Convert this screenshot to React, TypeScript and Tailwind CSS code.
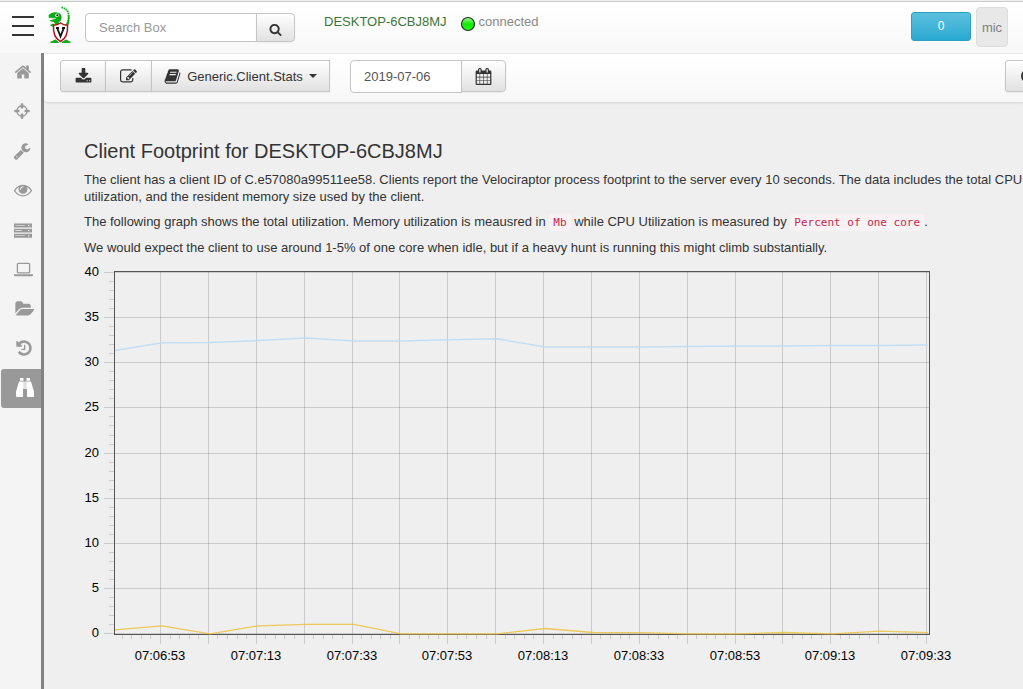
import React from "react";

const HOME =
  "M1472 992v480q0 26-19 45t-45 19h-384v-384h-256v384h-384q-26 0-45-19t-19-45v-480q0-1 .5-3t.5-3l575-474 575 474q1 2 1 6zm223-69l-62 74q-8 9-21 11h-3q-13 0-21-7l-692-577-692 577q-12 8-24 7-13-2-21-11l-62-74q-8-10-7-23.5t11-21.5l719-599q32-26 76-26t76 26l244 204v-195q0-14 9-23t23-9h192q14 0 23 9t9 23v408l219 182q10 8 11 21.5t-7 23.5z";
const SEARCH =
  "M1216 832q0-185-131.5-316.5t-316.5-131.5-316.5 131.5-131.5 316.5 131.5 316.5 316.5 131.5 316.5-131.5 131.5-316.5zm512 832q0 52-38 90t-90 38q-54 0-90-38l-343-342q-179 124-399 124-143 0-273.5-55.5t-225-150-150-225-55.5-273.5 55.5-273.5 150-225 225-150 273.5-55.5 273.5 55.5 225 150 150 225 55.5 273.5q0 220-124 399l343 343q37 37 37 90z";
const DOWNLOAD =
  "M1344 1344q0-26-19-45t-45-19-45 19-19 45 19 45 45 19 45-19 19-45zm256 0q0-26-19-45t-45-19-45 19-19 45 19 45 45 19 45-19 19-45zm128-224v320q0 40-28 68t-68 28h-1472q-40 0-68-28t-28-68v-320q0-40 28-68t68-28h465l135 136q58 56 136 56t136-56l136-136h464q40 0 68 28t28 68zm-325-569q17 41-14 70l-448 448q-18 19-45 19t-45-19l-448-448q-31-29-14-70 17-39 59-39h256v-448q0-26 19-45t45-19h256q26 0 45 19t19 45v448h256q42 0 59 39z";
const EDIT =
  "M888 1184l116-116-152-152-116 116v56h96v96h56zm440-720q-16-16-33 1l-350 350q-17 17-1 33t33-1l350-350q17-17 1-33zm80 594v190q0 119-84.5 203.5t-203.5 84.5h-832q-119 0-203.5-84.5t-84.5-203.5v-832q0-119 84.5-203.5t203.5-84.5h832q63 0 117 25 15 7 18 23 3 17-9 29l-49 49q-14 14-32 8-23-6-45-6h-832q-66 0-113 47t-47 113v832q0 66 47 113t113 47h832q66 0 113-47t47-113v-126q0-13 9-22l64-64q15-15 35-7t20 29zm-96-738l288 288-672 672h-288v-288zm444 132l-92 92-288-288 92-92q28-28 68-28t68 28l152 152q28 28 28 68t-28 68z";
const BOOK =
  "M1703 478q40 57 18 129l-275 906q-19 64-76.5 107.5t-122.5 43.5h-923q-77 0-148.5-53.5t-99.5-131.5q-24-67-2-127 0-4 3-27t4-37q1-8-3-21.5t-3-19.5q2-11 8-21t16.5-23.5 16.5-23.5q23-38 45-91.5t30-91.5q3-10 .5-30t-.5-28q3-11 17-28t17-23q21-36 42-92t25-90q1-9-2.5-32t.5-28q4-13 22-30.5t22-22.5q19-26 42.5-84.5t27.5-96.5q1-8-3-25.5t-2-26.5q2-8 9-18t18-23 17-21q8-12 16.5-30.5t15-35 16-36 19.5-32 26.5-23.5 36-11.5 47.5 5.5l-1 3q38-9 51-9h761q74 0 114 56t18 130l-274 906q-36 119-71.5 153.5t-128.5 34.5h-869q-27 0-38 15-11 16-1 43 24 70 144 70h923q29 0 56-15.5t35-41.5l300-987q7-22 5-57 38 15 59 43zm-1064 2q-4 13 2 22.5t20 9.5h608q13 0 25.5-9.5t16.5-22.5l21-64q4-13-2-22.5t-20-9.5h-608q-13 0-25.5 9.5t-16.5 22.5zm-83 256q-4 13 2 22.5t20 9.5h608q13 0 25.5-9.5t16.5-22.5l21-64q4-13-2-22.5t-20-9.5h-608q-13 0-25.5 9.5t-16.5 22.5z";
const CALENDAR =
  "M192 1664h288v-288h-288v288zm352 0h320v-288h-320v288zm-352-352h288v-320h-288v320zm352 0h320v-320h-320v320zm-352-384h288v-288h-288v288zm736 736h320v-288h-320v288zm-384-736h320v-288h-320v288zm768 736h288v-288h-288v288zm-384-352h320v-320h-320v320zm-352-864v-288q0-13-9.5-22.5t-22.5-9.5h-64q-13 0-22.5 9.5t-9.5 22.5v288q0 13 9.5 22.5t22.5 9.5h64q13 0 22.5-9.5t9.5-22.5zm736 864h288v-320h-288v320zm-384-384h320v-288h-320v288zm384 0h288v-288h-288v288zm32-480v-288q0-13-9.5-22.5t-22.5-9.5h-64q-13 0-22.5 9.5t-9.5 22.5v288q0 13 9.5 22.5t22.5 9.5h64q13 0 22.5-9.5t9.5-22.5zm384-64v1280q0 52-38 90t-90 38h-1408q-52 0-90-38t-38-90v-1280q0-52 38-90t90-38h128v-96q0-66 47-113t113-47h64q66 0 113 47t47 113v96h384v-96q0-66 47-113t113-47h64q66 0 113 47t47 113v96h128q52 0 90 38t38 90z";
const WRENCH =
  "M448 1472q0-26-19-45t-45-19-45 19-19 45 19 45 45 19 45-19 19-45zm644-420l-682 682q-37 37-90 37-52 0-91-37l-106-108q-38-36-38-90 0-53 38-91l681-681q39 98 114.5 173.5t173.5 114.5zm634-435q0 39-23 106-47 134-164.5 217.5t-258.5 83.5q-185 0-316.5-131.5t-131.5-316.5 131.5-316.5 316.5-131.5q58 0 121.5 16.5t107.5 46.5q16 11 16 28t-16 28l-293 169v224l193 107q5-3 79-48.5t135.5-81 70.5-35.5q15 0 23.5 10t8.5 25z";
const EYE =
  "M1664 960q-152-236-381-353 61 104 61 225 0 185-131.5 316.5t-316.5 131.5-316.5-131.5-131.5-316.5q0-121 61-225-229 117-381 353 133 205 333.5 326.5t434.5 121.5 434.5-121.5 333.5-326.5zm-720-384q0-20-14-34t-34-14q-125 0-214.5 89.5t-89.5 214.5q0 20 14 34t34 14 34-14 14-34q0-86 61-147t147-61q20 0 34-14t14-34zm848 384q0 34-20 69-140 230-376.5 368.5t-499.5 138.5-499.5-139-376.5-368q-20-35-20-69t20-69q140-229 376.5-368t499.5-139 499.5 139 376.5 368q20 35 20 69z";
const CROSSHAIRS =
  "M1325 1024h-109q-26 0-45-19t-19-45v-128q0-26 19-45t45-19h109q-32-108-112.5-188.5t-188.5-112.5v109q0 26-19 45t-45 19h-128q-26 0-45-19t-19-45v-109q-108 32-188.5 112.5t-112.5 188.5h109q26 0 45 19t19 45v128q0 26-19 45t-45 19h-109q32 108 112.5 188.5t188.5 112.5v-109q0-26 19-45t45-19h128q26 0 45 19t19 45v109q108-32 188.5-112.5t112.5-188.5zm339-192v128q0 26-19 45t-45 19h-143q-37 161-154.5 278.5t-278.5 154.5v143q0 26-19 45t-45 19h-128q-26 0-45-19t-19-45v-143q-161-37-278.5-154.5t-154.5-278.5h-143q-26 0-45-19t-19-45v-128q0-26 19-45t45-19h143q37-161 154.5-278.5t278.5-154.5v-143q0-26 19-45t45-19h128q26 0 45 19t19 45v143q161 37 278.5 154.5t154.5 278.5h143q26 0 45 19t19 45z";
const SERVER =
  "M0 256h1792v384h-1792zm128 160v64h960v-64zm1280-32v128h128v-128zM0 768h1792v384h-1792zm128 160v64h640v-64zm1280-32v128h128v-128zM0 1280h1792v384h-1792zm128 160v64h960v-64zm1280-32v128h128v-128z";
const LAPTOP =
  "M416 1280q-66 0-113-47t-47-113v-704q0-66 47-113t113-47h960q66 0 113 47t47 113v704q0 66-47 113t-113 47h-960zm-32-864v704q0 13 9.5 22.5t22.5 9.5h960q13 0 22.5-9.5t9.5-22.5v-704q0-13-9.5-22.5t-22.5-9.5h-960q-13 0-22.5 9.5t-9.5 22.5zM0 1344h1792v96q0 40-47 68t-113 28h-1472q-66 0-113-28t-47-68z";
const FOLDER =
  "M1815 952q0 31-31 66l-336 396q-43 51-120.5 86.5t-143.5 35.5h-1088q-34 0-60.5-13t-26.5-43q0-31 31-66l336-396q43-51 120.5-86.5t143.5-35.5h1088q34 0 60.5 13t26.5 43zm-343-344v160h-832q-94 0-197 47.5t-164 119.5l-337 396-5 6q0-4-.5-12.5t-.5-12.5v-960q0-92 66-158t158-66h320q92 0 158 66t66 158v32h544q92 0 158 66t66 158z";
const HISTORY =
  "M1664 896q0 156-61 298t-164 245-245 164-298 61q-172 0-327-72.5t-264-204.5q-7-10-6.5-22.5t8.5-20.5l137-138q10-9 25-9 16 2 23 12 73 95 179 147t225 52q104 0 198.5-40.5t163.5-109.5 109.5-163.5 40.5-198.5-40.5-198.5-109.5-163.5-163.5-109.5-198.5-40.5q-98 0-188 35.5t-160 101.5l137 138q31 30 14 69-17 40-59 40h-448q-26 0-45-19t-19-45v-448q0-42 40-59 39-17 69 14l130 129q107-101 244.5-156.5t284.5-55.5q156 0 298 61t245 164 164 245 61 298zm-640-288v448q0 14-9 23t-23 9h-320q-14 0-23-9t-9-23v-64q0-14 9-23t23-9h224v-352q0-14 9-23t23-9h64q14 0 23 9t9 23z";

function Icon({ d, className }: { d: string; className: string }) {
  return (
    <svg viewBox="0 0 1792 1792" className={`shrink-0 overflow-visible ${className}`} fill="currentColor" fillRule="evenodd" aria-hidden="true">
      <path d={d} />
    </svg>
  );
}

function Binoculars() {
  return (
    <svg width="18" height="19" viewBox="0 0 18 19" fill="currentColor" aria-hidden="true">
      <path d="M4 0h3.500v2.800H4zM10.500 0H14v2.800h-3.500z" />
      <path d="M3 3.600h4.800V11H7v7.200q0 .8-.8.8H.8q-.8 0-.8-.8v-4.500zM15 3.600h-4.800V11h.8v7.200q0 .8.8.8h5.400q.8 0 .8-.8v-4.500zM8.300 3.600h1.400V11H8.300z" />
    </svg>
  );
}

function Logo() {
  return (
    <svg width="24" height="38" viewBox="0 0 24 38" aria-label="Velociraptor" role="img">
      <path d="M13.500 1.300C18 2 21.500 6 20.700 12c-.3 3-1 5-2.200 7" fill="none" stroke="#0aab12" strokeWidth="1.800" strokeDasharray="1.600 .7" />
      <path d="M19.800 9c.6 4-.3 8-2.800 11l2.500 1c2-4 2.300-8 1.500-12z" fill="#0aab12" />
      <path d="M.5 9.500C2 7 6 5.500 9 6.500c3.500.3 5 3 4.500 6-.5 2.500-1.500 3-3 3.800l3 2.700-4.500 3-3-6-3-.5-1.500-1L7 13 1 12z" fill="#0aab12" />
      <path d="M1 12.300h7" stroke="#fff" strokeWidth=".7" />
      <circle cx="9" cy="9.200" r="1.800" fill="#fff" />
      <circle cx="9.300" cy="9.300" r="1" fill="#111" />
      <path d="M2 19l3-1.500 3 2-3 1.500z" fill="#0aab12" />
      <path d="M2.500 36.300l5-2.300 3 2.500zM14 36.500l4-2.500 4.500 2.300z" fill="#0aab12" stroke="#0aab12" />
      <path d="M12.500 17c2 1.500 4.500 2.200 7 2.200.5 7-1 13-7 16.300-6-3.300-7.500-9.300-7-16.300 2.500 0 5-.7 7-2.200z" fill="#fff" stroke="#b3151b" strokeWidth="1.500" />
      <path d="M8 22h3M14 22h3M9.200 22l3.300 8.500 3.300-8.500" stroke="#151515" strokeWidth="1.900" fill="none" />
    </svg>
  );
}

const navItems = [
  { label: "Home", d: HOME, pad: "pl-[14px]", size: "size-[18px]" },
  { label: "Hunts", d: CROSSHAIRS, pad: "pl-[13px]", size: "size-[18px]" },
  { label: "Artifacts", d: WRENCH, pad: "pl-[13px]", size: "size-[18px]" },
  { label: "Events", d: EYE, pad: "pl-[14px]", size: "size-[18px]" },
  { label: "Server", d: SERVER, pad: "pl-[14px]", size: "size-[18px]" },
  { label: "Host", d: LAPTOP, pad: "pl-[14px]", size: "size-[19px]" },
  { label: "Files", d: FOLDER, pad: "pl-[16px]", size: "size-[18px]" },
  { label: "History", d: HISTORY, pad: "pl-[15px]", size: "size-[18px]" },
];

const X0 = 90;
const STEP = 47.88;
const yOf = (v: number) => Math.round((367 - v * 9.025) * 10) / 10;
const memory = [31.3, 32.15, 32.2, 32.4, 32.7, 32.35, 32.35, 32.5, 32.6, 31.7, 31.7, 31.7, 31.75, 31.8, 31.8, 31.85, 31.85, 31.9];
const cpu = [0.35, 0.8, -0.1, 0.8, 0.95, 0.95, -0.1, -0.1, -0.1, 0.5, 0.05, 0.03, -0.1, -0.1, 0.05, -0.1, 0.2, 0.03];
const times = ["07:06:53", "07:07:13", "07:07:33", "07:07:53", "07:08:13", "07:08:33", "07:08:53", "07:09:13", "07:09:33"];
const points = (values: number[]) =>
  values.map((v, i) => `${i === 0 ? 45 : Math.round(X0 + 2 + (i - 1) * STEP)},${yOf(v)}`).join(" ");

function Chart() {
  const majors = Array.from({ length: 18 }, (_, i) => Math.round(X0 + i * STEP)).filter((x) => x < 859);
  const minorX = Array.from({ length: 85 }, (_, i) => Math.round(X0 + (i - 4) * (STEP / 5)));
  const minorY = Array.from({ length: 41 }, (_, i) => Math.round(yOf(i)));
  const levels = [0, 5, 10, 15, 20, 25, 30, 35, 40];
  return (
    <svg width="900" height="416" viewBox="0 -6 900 416" className="block shrink-0" role="img" aria-label="Memory and CPU utilization">
      <g stroke="#000" strokeOpacity=".15" shapeRendering="crispEdges">
        {majors.map((x) => <line key={x} x1={x + 0.5} x2={x + 0.5} y1="6" y2="378" />)}
        {levels.map((v) => <line key={v} x1="34" x2="859" y1={Math.round(yOf(v)) + 0.5} y2={Math.round(yOf(v)) + 0.5} />)}
        {minorX.filter((x) => x < 859 && !majors.includes(x)).map((x) => <line key={x} x1={x + 0.5} x2={x + 0.5} y1="369" y2="373" />)}
        {minorY.filter((_, i) => i % 5 !== 0).map((y) => <line key={y} x1="39" x2="44" y1={y + 0.5} y2={y + 0.5} />)}
      </g>
      <rect x="44.5" y="5.500" width="815" height="363" fill="none" stroke="#545454" />
      <polyline points={points(memory)} fill="none" stroke="#c3def4" strokeWidth="1.500" />
      <polyline points={points(cpu)} fill="none" stroke="#edc240" strokeOpacity=".85" strokeWidth="1.300" />
      <g fontSize="13" fill="#000">
        {levels.map((v) => (
          <text key={v} x="29" y={Math.round(yOf(v)) + 4} textAnchor="end">{v}</text>
        ))}
        {times.map((t, i) => (
          <text key={t} x={majors[i * 2]} y="394" textAnchor="middle">{t}</text>
        ))}
      </g>
    </svg>
  );
}

const button = "flex items-center justify-center border border-[#c5c5c5] bg-linear-to-b from-white to-[#e1e1e1] text-[#333] shadow-xs";

export default function App() {
  return (
    <div className="flex min-h-screen flex-col overflow-hidden bg-[#efefef] font-['Liberation_Sans',Arial,sans-serif] text-[13px] leading-[17px] text-[#333]">
      <header className="mt-px flex h-[52px] shrink-0 items-start border-t border-[#c9c9c9] bg-linear-to-b from-white to-[#f8f8f8] pr-[15px]">
        <button aria-label="Menu" className="mt-[14px] ml-[12px] flex w-[22px] flex-col gap-[7px]">
          <span className="h-[2px] w-full bg-[#333]" />
          <span className="h-[2px] w-full bg-[#333]" />
          <span className="h-[2px] w-full bg-[#333]" />
        </button>
        <a href="#home" className="mt-[4px] ml-[14px]"><Logo /></a>
        <form className="mt-[11px] ml-[13px] flex h-[29px]">
          <input aria-label="Search Box" placeholder="Search Box" className="w-[172px] rounded-l border border-[#c5c5c5] bg-white px-[13px] placeholder:text-[#999]" />
          <button type="button" aria-label="Search" className={`${button} -ml-px w-[39px] rounded-r pt-[3px]`}>
            <Icon d={SEARCH} className="size-[13px]" />
          </button>
        </form>
        <div className="mt-[11px] ml-[29px] flex items-start text-[#3c763d]">
          <span>DESKTOP-6CBJ8MJ</span>
          <svg width="16" height="16" viewBox="0 0 16 16" className="mt-[3px] ml-[13px]" aria-hidden="true">
            <defs>
              <linearGradient id="lamp" x1="0" y1="0" x2="0" y2="1">
                <stop offset="0" stopColor="#9dff8c" />
                <stop offset=".5" stopColor="#14e808" />
                <stop offset="1" stopColor="#1cff10" />
              </linearGradient>
            </defs>
            <circle cx="8" cy="8" r="6.500" fill="url(#lamp)" stroke="#2b2b33" strokeWidth="1.200" />
          </svg>
          <span className="ml-[3px] text-[#888]">connected</span>
        </div>
        <div className="ml-auto flex gap-[5px]">
          <button className="mt-[10px] h-[29px] w-[60px] rounded-[3px] border border-[#2f9fc0] bg-linear-to-b from-[#5bc0de] to-[#28a9d2] text-[12px] text-white">0</button>
          <button className="mt-[5px] h-[40px] w-[32px] rounded border border-[#dcdcdc] bg-[#e8e8e8] text-[#808080]">mic</button>
        </div>
      </header>

      <div className="flex flex-1">
        <nav className="flex w-[44px] shrink-0 flex-col border-r-3 border-[#818181] bg-[#f4f4f4] text-[#999]">
          <div className="flex h-[316px] flex-col">
            {navItems.map((item) => (
              <a key={item.label} href={`#${item.label.toLowerCase()}`} aria-label={item.label} className={`flex flex-1 items-center pb-[2px] ${item.pad}`}>
                <Icon d={item.d} className={item.size} />
              </a>
            ))}
          </div>
          <a href="#monitoring" aria-label="Monitoring" className="ml-px flex h-[39px] items-center rounded-l-[3px] bg-[#999] pb-[2px] pl-[15px] text-white">
            <Binoculars />
          </a>
        </nav>

        <main className="min-w-0 flex-1">
          <div className="flex h-[50px] items-start overflow-hidden rounded-bl border-t border-b border-t-[#e8e8e8] border-b-[#dedede] bg-linear-to-b from-white to-[#f7f7f7] pt-[6px] pl-[16px] shadow-xs">
            <div className="flex h-[32px] shrink-0">
              <button aria-label="Download" className={`${button} w-[46px] rounded-l-[3px]`}>
                <Icon d={DOWNLOAD} className="size-[17px]" />
              </button>
              <button aria-label="Edit" className={`${button} -ml-px w-[47px]`}>
                <Icon d={EDIT} className="size-[17px]" />
              </button>
              <button className={`${button} -ml-px w-[179px]`}>
                <Icon d={BOOK} className="size-[17px]" />
                <span className="ml-[6px]">Generic.Client.Stats</span>
                <span className="ml-[6px] border-x-4 border-t-4 border-x-transparent border-t-[#333]" />
              </button>
            </div>
            <div className="ml-[20px] flex h-[33px] shrink-0">
              <input aria-label="Date" defaultValue="2019-07-06" className="w-[112px] rounded-l border border-[#c5c5c5] bg-white px-[13px] text-[#555]" />
              <button aria-label="Choose date" className={`${button} -ml-px h-[32px] w-[45px] rounded-r`}>
                <Icon d={CALENDAR} className="size-[17px]" />
              </button>
            </div>
            <button aria-label="Time range" className={`${button} -mr-[28px] ml-auto h-[32px] w-[46px] shrink-0 rounded-l-[3px]`}>
              <svg viewBox="0 0 16 16" className="size-[16px]" fill="none" stroke="currentColor" strokeWidth="2" aria-hidden="true">
                <circle cx="8" cy="8" r="6" />
                <path d="M8 4v4h-3" />
              </svg>
            </button>
          </div>

          <article className="pt-[36px] pl-[40px]">
            <h3 className="text-[20px] leading-[24px]">Client Footprint for DESKTOP-6CBJ8MJ</h3>
            <p className="mt-[8px]">
              The client has a client ID of C.e57080a99511ee58. Clients report the Velociraptor process footprint to the server every 10 seconds. The data includes the total CPU utilization, and the resident memory size used by the client.
            </p>
            <p className="mt-[8px]">
              The following graph shows the total utilization. Memory utilization is meausred in{" "}
              <code className="rounded bg-[#f9f2f4] px-[4px] py-[2px] font-['DejaVu_Sans_Mono',monospace] text-[11px] text-[#c7254e]">Mb</code>{" "}
              while CPU Utilization is measured by{" "}
              <code className="rounded bg-[#f9f2f4] px-[4px] py-[2px] font-['DejaVu_Sans_Mono',monospace] text-[11px] text-[#c7254e]">Percent of one core</code>.
            </p>
            <p className="mt-[8px]">
              We would expect the client to use around 1-5% of one core when idle, but if a heavy hunt is running this might climb substantially.
            </p>
            <div className="-ml-[14px] mt-[4px]">
              <Chart />
            </div>
          </article>
        </main>
      </div>
    </div>
  );
}
